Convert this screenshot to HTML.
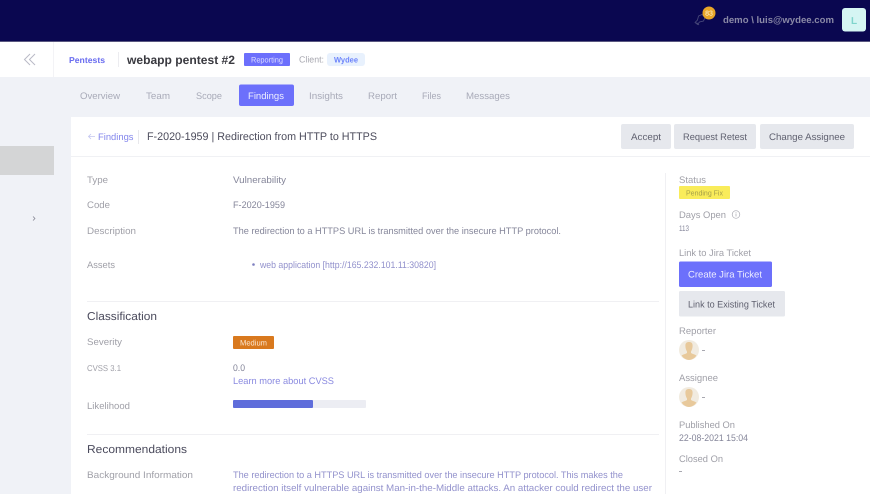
<!DOCTYPE html>
<html><head><meta charset="utf-8"><style>
html,body{margin:0;padding:0;width:870px;height:494px;overflow:hidden;background:#f0f2f7}
svg{display:block;filter:blur(.25px)}
text{font-family:"Liberation Sans",sans-serif;font-size:9.5px;fill:#8f8f97}
.v{fill:#85869a}.l{fill:#a0a0a8}.h{font-size:11.5px;fill:#4a4a5c}.t{fill:#a8aab8}.p{fill:#9291cc}.b{fill:#5f606f}
</style></head><body>
<svg width="870" height="494" viewBox="0 0 870 494" xmlns="http://www.w3.org/2000/svg" text-rendering="geometricPrecision">
<defs>
<g id="av"><circle r="10" fill="#f1ebe0"/><path d="M-3.6-4.5C-3.6-7.4-1.8-8 0-8s3.6.6 3.6 3.5c0 3-1 5-1.6 6v1.5c1 .9 3.8 1.2 5.4 2.6A10 10 0 0 1 0 10 10 10 0 0 1-7.4 5.6C-5.8 4.200-3 3.900-2 3V1.500C-2.600.5-3.600-1.500-3.600-4.500Z" fill="#e8c99b"/></g>
</defs>
<rect width="870" height="494" fill="#f0f2f7"/>
<rect width="870" height="41" fill="#0a0750"/>
<rect y="41" width="870" height="1" fill="#5a5880"/>
<rect y="42" width="870" height="35" fill="#fff"/>
<rect x="53" y="42" width="1" height="35" fill="#f3f3f6"/>
<path d="M30 54l-5.500 5.500 5.500 5.500M35 54l-5.500 5.500 5.500 5.500" fill="none" stroke="#b9bac6" stroke-width="1"/>

<path d="M695 22.500l2.500-2.500 1-4 3.500-1.500 3 3-1.500 3.500-4 1-2 2.500zM696.500 22.500l2.500 2.500" fill="none" stroke="#4c4c7c" stroke-width=".8"/>
<circle cx="709" cy="13" r="6.500" fill="#e8a628"/>
<text x="709" y="15.500" text-anchor="middle" style="font-size:7px;fill:#fff3d8">83</text>
<text x="723" y="23" textLength="111" lengthAdjust="spacingAndGlyphs" style="font-size:9.500px;font-weight:700;fill:#8a89a6">demo \ luis@wydee.com</text>
<rect x="842" y="8" width="24" height="23.500" rx="3" fill="#d5f5f3"/>
<text x="854" y="24" text-anchor="middle" style="font-size:10px;font-weight:700;fill:#7fd4cc">L</text>

<text x="69" y="63" textLength="36" lengthAdjust="spacingAndGlyphs" style="font-size:8.500px;font-weight:700;fill:#6a6df0">Pentests</text>
<rect x="118" y="52" width="1" height="15" fill="#ececf0"/>
<text x="127" y="64" textLength="108" lengthAdjust="spacingAndGlyphs" style="font-size:12px;font-weight:700;fill:#3a3a40">webapp pentest #2</text>
<rect x="244" y="53" width="46" height="13" rx="1" fill="#6c6ffc"/>
<text x="251" y="62.500" textLength="32" lengthAdjust="spacingAndGlyphs" style="font-size:8px;fill:#dcdcff">Reporting</text>
<text x="299" y="62.500" textLength="25" lengthAdjust="spacingAndGlyphs" style="font-size:9px;fill:#a8a8b0">Client:</text>
<rect x="327" y="53" width="38" height="13" rx="3" fill="#e8f1fd"/>
<text x="334" y="62.500" textLength="24" lengthAdjust="spacingAndGlyphs" style="font-size:8px;font-weight:700;fill:#6d84fb">Wydee</text>

<text class="t" x="80" y="99" textLength="40" lengthAdjust="spacingAndGlyphs">Overview</text>
<text class="t" x="146" y="99" textLength="24" lengthAdjust="spacingAndGlyphs">Team</text>
<text class="t" x="196" y="99" textLength="26" lengthAdjust="spacingAndGlyphs">Scope</text>
<rect x="239" y="84.500" width="55" height="21.500" rx="2" fill="#6c70fb"/>
<text x="248" y="99" textLength="36" lengthAdjust="spacingAndGlyphs" style="fill:#eeeeff">Findings</text>
<text class="t" x="309" y="99" textLength="34" lengthAdjust="spacingAndGlyphs">Insights</text>
<text class="t" x="368" y="99" textLength="29" lengthAdjust="spacingAndGlyphs">Report</text>
<text class="t" x="422" y="99" textLength="19" lengthAdjust="spacingAndGlyphs">Files</text>
<text class="t" x="466" y="99" textLength="44" lengthAdjust="spacingAndGlyphs">Messages</text>

<rect x="0" y="146" width="54" height="29" fill="#d4d5d6"/>
<path d="M33 216.500l2 2-2 2" fill="none" stroke="#7a7a88" stroke-width=".7"/>

<rect x="71" y="117" width="799" height="377" fill="#fff"/>
<rect x="71" y="156" width="799" height="1" fill="#f0f1f4"/>
<path d="M95 136.500h-6.500M91 134l-2.500 2.500 2.500 2.500" fill="none" stroke="#c3c6f0" stroke-width=".8"/>
<text x="98" y="140" textLength="35.500" lengthAdjust="spacingAndGlyphs" style="fill:#8487ec">Findings</text>
<rect x="138" y="130" width="1" height="14" fill="#e8e8ec"/>
<text x="147" y="140" textLength="230" lengthAdjust="spacingAndGlyphs" style="font-size:11px;fill:#4c4c5c">F-2020-1959 | Redirection from HTTP to HTTPS</text>

<rect x="621" y="124" width="50" height="25" rx="2" fill="#e6e8ed"/>
<text class="b" x="631" y="140" textLength="30" lengthAdjust="spacingAndGlyphs">Accept</text>
<rect x="674" y="124" width="82" height="25" rx="2" fill="#e6e8ed"/>
<text class="b" x="683" y="140" textLength="64" lengthAdjust="spacingAndGlyphs">Request Retest</text>
<rect x="760" y="124" width="94" height="25" rx="2" fill="#e6e8ed"/>
<text class="b" x="769" y="140" textLength="76" lengthAdjust="spacingAndGlyphs">Change Assignee</text>

<text class="l" x="87" y="183" textLength="21" lengthAdjust="spacingAndGlyphs">Type</text>
<text class="v" x="233" y="183" textLength="53" lengthAdjust="spacingAndGlyphs">Vulnerability</text>
<text class="l" x="87" y="208" textLength="23" lengthAdjust="spacingAndGlyphs">Code</text>
<text class="v" x="233" y="208" textLength="52" lengthAdjust="spacingAndGlyphs">F-2020-1959</text>
<text class="l" x="87" y="234" textLength="49" lengthAdjust="spacingAndGlyphs">Description</text>
<text class="v" x="233" y="234" textLength="328" lengthAdjust="spacingAndGlyphs">The redirection to a HTTPS URL is transmitted over the insecure HTTP protocol.</text>
<text class="l" x="87" y="268" textLength="28" lengthAdjust="spacingAndGlyphs">Assets</text>
<circle cx="253.500" cy="264.500" r="1.300" fill="#7e80c0"/>
<text class="p" x="260" y="268" textLength="176" lengthAdjust="spacingAndGlyphs">web application [http://165.232.101.11:30820]</text>
<rect x="87" y="301" width="572" height="1" fill="#f0f0f3"/>

<text class="h" x="87" y="320" textLength="70" lengthAdjust="spacingAndGlyphs">Classification</text>
<text class="l" x="87" y="345" textLength="35" lengthAdjust="spacingAndGlyphs">Severity</text>
<rect x="233" y="336" width="41" height="13" rx="1" fill="#d9791e"/>
<text x="240" y="345.500" textLength="27" lengthAdjust="spacingAndGlyphs" style="font-size:8px;fill:#fbe6d0">Medium</text>
<text class="l" x="87" y="371" textLength="34" lengthAdjust="spacingAndGlyphs" style="font-size:8.500px">CVSS 3.1</text>
<text class="v" x="233" y="371" textLength="12" lengthAdjust="spacingAndGlyphs">0.0</text>
<text x="233" y="384" textLength="101" lengthAdjust="spacingAndGlyphs" style="fill:#8a8ae0">Learn more about CVSS</text>
<text class="l" x="87" y="409" textLength="43" lengthAdjust="spacingAndGlyphs">Likelihood</text>
<rect x="233" y="400" width="133" height="8" rx="1" fill="#ecedf3"/>
<rect x="233" y="400" width="80" height="8" rx="1" fill="#5f6ddb"/>
<rect x="87" y="434" width="572" height="1" fill="#f0f0f3"/>
<text class="h" x="87" y="453" textLength="100" lengthAdjust="spacingAndGlyphs">Recommendations</text>
<text class="l" x="87" y="478" textLength="106" lengthAdjust="spacingAndGlyphs">Background Information</text>
<text class="p" x="233" y="478" textLength="390" lengthAdjust="spacingAndGlyphs">The redirection to a HTTPS URL is transmitted over the insecure HTTP protocol. This makes the</text>
<text class="p" x="233" y="491" textLength="419" lengthAdjust="spacingAndGlyphs">redirection itself vulnerable against Man-in-the-Middle attacks. An attacker could redirect the user</text>

<rect x="665" y="173" width="1" height="321" fill="#f0f0f3"/>
<text class="l" x="679" y="183" textLength="27" lengthAdjust="spacingAndGlyphs">Status</text>
<rect x="679" y="186" width="51" height="13" rx="1" fill="#f9ec5a"/>
<text x="686" y="195.500" textLength="37" lengthAdjust="spacingAndGlyphs" style="font-size:7.500px;fill:#a5a04a">Pending Fix</text>
<text class="l" x="679" y="218" textLength="47" lengthAdjust="spacingAndGlyphs">Days Open</text>
<circle cx="736" cy="214.500" r="3.800" fill="none" stroke="#a8a8b0" stroke-width=".7"/>
<path d="M736 213.500v3M736 212v.8" stroke="#a8a8b0" stroke-width=".7"/>
<text class="v" x="679" y="231" textLength="10" lengthAdjust="spacingAndGlyphs" style="font-size:8px">113</text>
<text class="l" x="679" y="256" textLength="72" lengthAdjust="spacingAndGlyphs">Link to Jira Ticket</text>
<rect x="679" y="261.500" width="93" height="25.500" rx="1.500" fill="#6c70fb"/>
<text x="688" y="277.500" textLength="74" lengthAdjust="spacingAndGlyphs" style="fill:#eeeeff">Create Jira Ticket</text>
<rect x="679" y="291" width="106" height="25.500" rx="1.500" fill="#e6e8ed"/>
<text class="b" x="688" y="307.500" textLength="87" lengthAdjust="spacingAndGlyphs">Link to Existing Ticket</text>
<text class="l" x="679" y="334" textLength="37" lengthAdjust="spacingAndGlyphs">Reporter</text>
<use href="#av" x="689" y="350"/>
<rect x="702" y="350" width="3" height="1" fill="#a8a8b0"/>
<text class="l" x="679" y="381" textLength="39" lengthAdjust="spacingAndGlyphs">Assignee</text>
<use href="#av" x="689" y="397"/>
<rect x="702" y="397" width="3" height="1" fill="#a8a8b0"/>
<text class="l" x="679" y="428" textLength="56" lengthAdjust="spacingAndGlyphs">Published On</text>
<text class="v" x="679" y="441" textLength="69" lengthAdjust="spacingAndGlyphs">22-08-2021 15:04</text>
<text class="l" x="679" y="462" textLength="44" lengthAdjust="spacingAndGlyphs">Closed On</text>
<rect x="679" y="471" width="3" height="1" fill="#a8a8b0"/>
</svg>
</body></html>
